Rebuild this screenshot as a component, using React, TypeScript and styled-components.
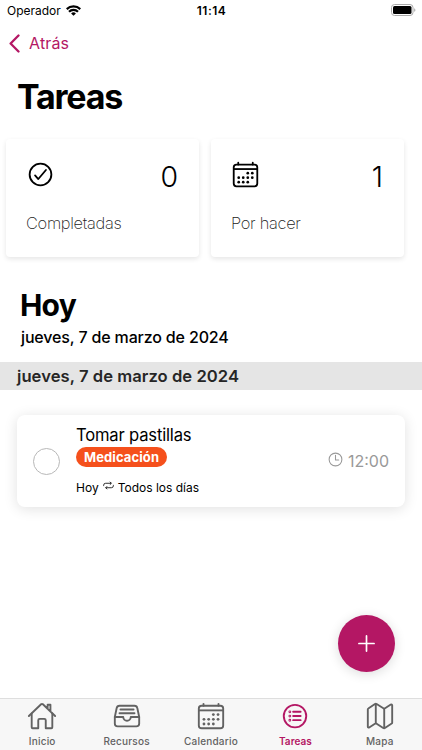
import React from "react";
import styled, { createGlobalStyle } from "styled-components";
import {
  IoAddOutline,
  IoCalendarOutline,
  IoCheckmarkCircleOutline,
  IoFileTrayFullOutline,
  IoHomeOutline,
  IoListCircleOutline,
  IoMapOutline,
  IoRepeatOutline,
  IoTimeOutline,
} from "react-icons/io5";

const Global = createGlobalStyle`
  * { box-sizing: border-box; }
  body { margin: 0; background: #fff; overflow: hidden; }
  svg { display: block; flex: none; }
`;

const Screen = styled.div`
  width: 422px;
  height: 750px;
  position: relative;
  display: flex;
  flex-direction: column;
  background: #fff;
  color: #000;
  font-family: Inter, "Liberation Sans", sans-serif;
  white-space: nowrap;
`;

const StatusBar = styled.header`
  height: 22px;
  flex: none;
  display: grid;
  grid-template-columns: 1fr auto 1fr;
  align-items: start;
  padding: 0 6px 0 7px;
  font-size: 12px;
`;
const Carrier = styled.div`
  display: flex;
  align-items: center;
  gap: 5px;
  height: 21px;
`;
const Clock = styled.div`
  line-height: 21px;
  font-weight: 600;
  letter-spacing: 0.45px;
`;
const BatterySlot = styled.div`
  display: flex;
  justify-content: flex-end;
  height: 20px;
  align-items: center;
`;

const BackLink = styled.a`
  height: 42px;
  flex: none;
  display: flex;
  align-items: center;
  gap: 9px;
  padding: 0 9px;
  color: #b41764;
  font-size: 16px;
  letter-spacing: 0.15px;
`;

const Title = styled.h1`
  margin: 12px 0 0 17px;
  font-size: 34px;
  line-height: 41px;
  font-weight: 700;
  letter-spacing: -1.2px;
`;

const Summary = styled.section`
  display: grid;
  grid-template-columns: 193px 193px;
  gap: 12px;
  margin: 22px 0 0 6px;
`;
const SummaryCard = styled.article`
  height: 118px;
  border-radius: 4px;
  background: #fff;
  box-shadow: 0 2px 5px rgba(0, 0, 0, 0.1);
  padding: 21px 21px 0 20px;
`;
const CardTop = styled.div`
  height: 34px;
  display: flex;
  justify-content: space-between;
`;
const Count = styled.span`
  font-size: 28.5px;
  line-height: 34px;
  font-weight: 300;
`;
const CardLabel = styled.div`
  margin-top: 18px;
  font-size: 16.4px;
  line-height: 22px;
  font-weight: 200;
  color: #222;
  letter-spacing: -0.3px;
`;

const DayTitle = styled.h2`
  margin: 30px 0 0 20px;
  font-size: 30px;
  line-height: 36px;
  font-weight: 700;
  letter-spacing: -0.8px;
`;
const DayDate = styled.div`
  margin-left: 21px;
  margin-top: 3px;
  height: 22px;
  font-size: 16px;
  line-height: 22px;
  font-weight: 500;
  letter-spacing: -0.15px;
`;
const DateBand = styled.div`
  height: 28px;
  flex: none;
  margin-top: 14px;
  padding-left: 17px;
  background: #e5e5e5;
  color: #262626;
  font-size: 16.6px;
  line-height: 28px;
  font-weight: 600;
  letter-spacing: 0.05px;
`;

const Task = styled.article`
  height: 92px;
  margin: 25px 17px 0;
  padding: 0 16px;
  display: flex;
  align-items: center;
  border-radius: 8px;
  background: #fff;
  box-shadow: 0 2px 14px rgba(0, 0, 0, 0.12);
`;
const Radio = styled.button`
  width: 27px;
  height: 27px;
  padding: 0;
  border: 1px solid #b8b8b8;
  border-radius: 50%;
  background: #fff;
`;
const TaskBody = styled.div`
  flex: 1;
  align-self: stretch;
  padding: 9px 0 0 16px;
  display: flex;
  flex-direction: column;
  align-items: flex-start;
`;
const TaskName = styled.div`
  font-size: 16.6px;
  line-height: 22px;
  margin-bottom: 1px;
  letter-spacing: -0.18px;
`;
const Tag = styled.span`
  height: 20px;
  padding: 0 8px;
  border-radius: 10px;
  background: #f5501c;
  color: #fff;
  font-size: 13px;
  line-height: 20px;
  font-weight: 700;
  letter-spacing: 0.1px;
`;
const Recurrence = styled.div`
  margin-top: 12px;
  display: flex;
  align-items: center;
  gap: 4px;
  font-size: 12px;
  line-height: 16px;
`;
const TaskTime = styled.div`
  display: flex;
  align-items: center;
  gap: 4px;
  color: #999;
  font-size: 16px;
  line-height: 22px;
`;
const Lift = styled.span`
  padding-bottom: 4px;
`;
const RepeatSlot = styled(Lift)`
  margin: 0 -1px;
`;

const AddButton = styled.button`
  position: absolute;
  left: 338px;
  top: 615px;
  width: 57px;
  height: 57px;
  padding: 0;
  border: 0;
  border-radius: 50%;
  display: grid;
  place-items: center;
  background: #b41764;
  color: #fff;
  box-shadow: 0 2px 12px rgba(0, 0, 0, 0.14);
`;

const TabBar = styled.nav`
  height: 52px;
  flex: none;
  margin-top: auto;
  display: grid;
  grid-template-columns: repeat(5, 1fr);
  border-top: 1px solid #dedede;
  background: #f7f7f7;
`;
const Tab = styled.a<{ $active?: boolean }>`
  display: flex;
  flex-direction: column;
  align-items: center;
  padding-top: 2px;
  color: ${(p) => (p.$active ? "#b41764" : "#626262")};
  font-size: 10px;
  line-height: 14px;
  font-weight: ${(p) => (p.$active ? 600 : 500)};
  letter-spacing: ${(p) => (p.$active ? "0.05px" : "0.2px")};
  svg { margin-bottom: 3px; }
`;

const tabs = [
  { label: "Inicio", Icon: IoHomeOutline },
  { label: "Recursos", Icon: IoFileTrayFullOutline },
  { label: "Calendario", Icon: IoCalendarOutline },
  { label: "Tareas", Icon: IoListCircleOutline, active: true },
  { label: "Mapa", Icon: IoMapOutline },
];

const Wifi = () => (
  <svg width="15" height="11" viewBox="0 0 15 11" fill="none" stroke="#000" strokeWidth="2.2">
    <path d="M.7 4.1a9.8 9.8 0 0 1 13.6 0" />
    <path d="M3 6.7a6.4 6.4 0 0 1 9 0" />
    <path d="M7.5 10.8 5.1 8.5a3.5 3.5 0 0 1 4.8 0Z" fill="#000" stroke="none" />
  </svg>
);

const Battery = () => (
  <svg width="25" height="12" viewBox="0 0 25 12">
    <rect x=".5" y=".5" width="21.5" height="11" rx="3" fill="#fff" stroke="#aaa" />
    <rect x="2" y="2" width="18.5" height="8" rx="1.5" />
    <path d="M23.3 4.2c1.4.5 1.4 3.1 0 3.6Z" fill="#999" />
  </svg>
);

const Chevron = () => (
  <svg width="11" height="19" viewBox="0 0 11 19" fill="none" stroke="currentColor" strokeWidth="2.3" strokeLinecap="round" strokeLinejoin="round">
    <path d="M9.5 1.5 1.6 9.5l7.9 8" />
  </svg>
);

export default function App() {
  return (
    <Screen>
      <Global />
      <StatusBar>
        <Carrier>Operador <Wifi /></Carrier>
        <Clock>11:14</Clock>
        <BatterySlot><Battery /></BatterySlot>
      </StatusBar>
      <BackLink><Chevron />Atrás</BackLink>
      <Title>Tareas</Title>
      <Summary>
        <SummaryCard>
          <CardTop><IoCheckmarkCircleOutline size={29} /><Count>0</Count></CardTop>
          <CardLabel>Completadas</CardLabel>
        </SummaryCard>
        <SummaryCard>
          <CardTop><IoCalendarOutline size={29} /><Count>1</Count></CardTop>
          <CardLabel>Por hacer</CardLabel>
        </SummaryCard>
      </Summary>
      <DayTitle>Hoy</DayTitle>
      <DayDate>jueves, 7 de marzo de 2024</DayDate>
      <DateBand>jueves, 7 de marzo de 2024</DateBand>
      <Task>
        <Radio aria-label="Completar" />
        <TaskBody>
          <TaskName>Tomar pastillas</TaskName>
          <Tag>Medicación</Tag>
          <Recurrence>
            <span>Hoy</span>
            <RepeatSlot><IoRepeatOutline size={13} /></RepeatSlot>
            <span>Todos los días</span>
          </Recurrence>
        </TaskBody>
        <TaskTime><Lift><IoTimeOutline size={17} /></Lift>12:00</TaskTime>
      </Task>
      <AddButton aria-label="Añadir"><IoAddOutline size={27} /></AddButton>
      <TabBar>
        {tabs.map(({ label, Icon, active }) => (
          <Tab key={label} $active={active}><Icon size={30} />{label}</Tab>
        ))}
      </TabBar>
    </Screen>
  );
}
